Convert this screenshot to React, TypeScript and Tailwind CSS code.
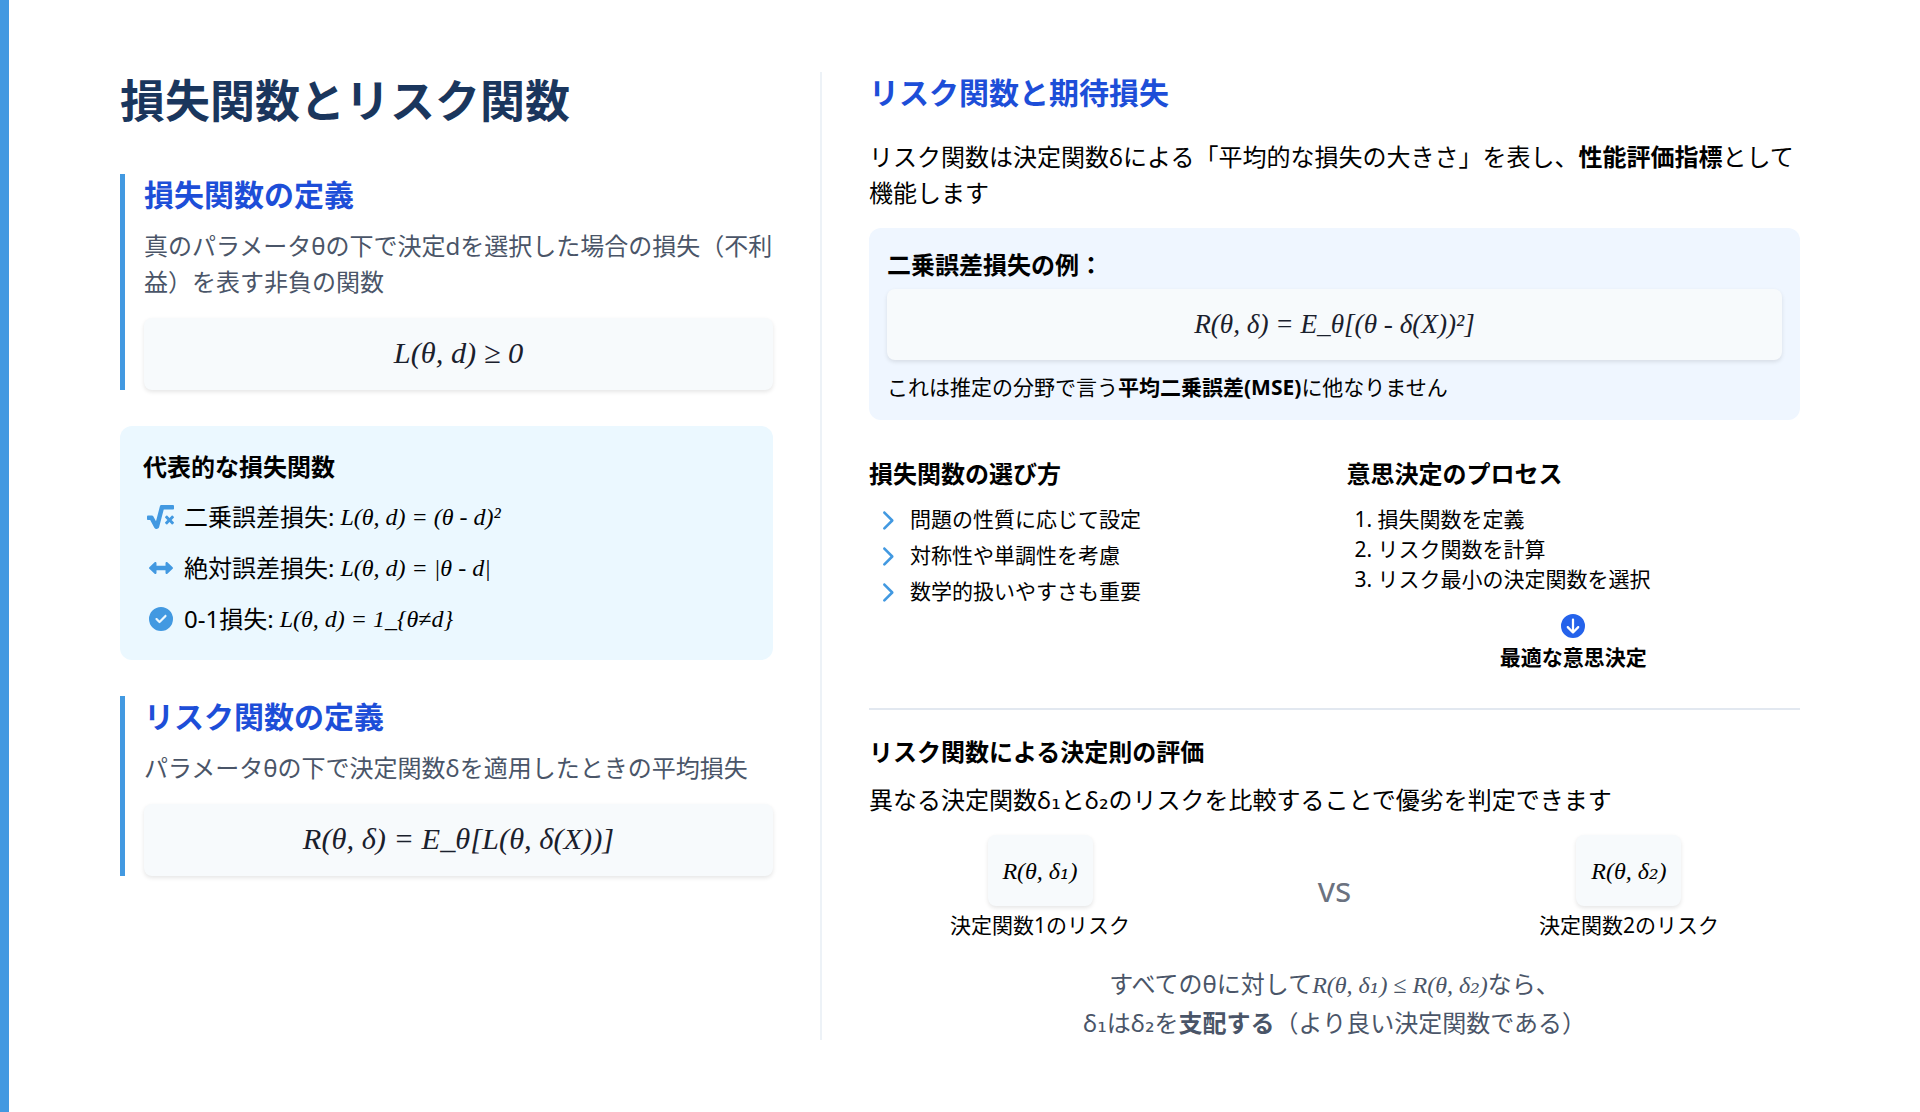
import { FaLeftRight, FaCircleCheck, FaChevronRight, FaCircleArrowDown } from 'react-icons/fa6';
import { FaSquareRootAlt } from 'react-icons/fa';

const jp = { fontFamily: '"Noto Sans", "Noto Sans CJK JP", sans-serif' };

function Math({ children, className = '' }: { children: React.ReactNode; className?: string }) {
  return <span className={`font-['Liberation_Serif',serif] italic ${className}`}>{children}</span>;
}

// the subscripts in the formulas and the body text come from DejaVu
function MathSub({ children }: { children: React.ReactNode }) {
  return <span className="font-['DejaVu_Serif',serif]">{children}</span>;
}

function Sub({ children }: { children: React.ReactNode }) {
  return <span className="font-['DejaVu_Sans',sans-serif]">{children}</span>;
}

function FormulaBox({ children }: { children: React.ReactNode }) {
  return (
    <div className="h-[72px] flex items-center justify-center rounded-lg bg-[#f7fafc] shadow-[0_2px_4px_rgba(0,0,0,0.1)] text-[30.4px] text-[#1a202c]">
      <Math>{children}</Math>
    </div>
  );
}

function Definition({ title, text, formula }: { title: string; text: string; formula: string }) {
  return (
    <section className="border-l-[5px] border-[#4299e1] pl-[19px]">
      <h2 className="text-[30px] leading-[42px] font-bold text-[#1d4ed8] mb-[12px]">{title}</h2>
      <p className="text-[24px] leading-[36px] text-[#4a5568] mb-[18px]">{text}</p>
      <FormulaBox>{formula}</FormulaBox>
    </section>
  );
}

export default function App() {
  const losses = [
    { icon: <FaSquareRootAlt className="h-[24px] w-[27px] -ml-[2px]" />, label: '二乗誤差損失:', formula: 'L(θ, d) = (θ - d)²' },
    { icon: <FaLeftRight className="h-[24px] w-[24px]" />, label: '絶対誤差損失:', formula: 'L(θ, d) = |θ - d|' },
    { icon: <FaCircleCheck className="h-[24px] w-[24px]" />, label: '0-1損失:', formula: 'L(θ, d) = 1_{θ≠d}' },
  ];

  return (
    <div style={jp} className="w-[1920px] h-[1112px] bg-white border-l-[9px] border-[#4299e1] flex pl-[111px] pr-[120px] pt-[72px] text-black overflow-hidden">
      <div className="w-[702px] h-[968px] border-r-2 border-[#edf2f7] pr-[47px] shrink-0">
        <h1 className="text-[45px] leading-[58px] font-bold text-[#1a365d] mb-[44px]">損失関数とリスク関数</h1>
        <Definition
          title="損失関数の定義"
          text="真のパラメータθの下で決定dを選択した場合の損失（不利益）を表す非負の関数"
          formula="L(θ, d) ≥ 0"
        />
        <div className="mt-[36px] mb-[36px] h-[234px] rounded-xl bg-[#ebf8ff] px-[23px] pt-[23px]">
          <h3 className="text-[24px] leading-[36px] font-bold mb-[6px]">代表的な損失関数</h3>
          <ul>
            {losses.map(l => (
              <li key={l.label} className="flex items-center h-[51px] text-[24px]">
                <span className="text-[#4299e1] w-[36px] mr-[5px] flex justify-center">{l.icon}</span>
                <span>{l.label}</span>
                <Math className="ml-[6px] text-[24px]">{l.formula}</Math>
              </li>
            ))}
          </ul>
        </div>
        <Definition
          title="リスク関数の定義"
          text="パラメータθの下で決定関数δを適用したときの平均損失"
          formula="R(θ, δ) = E_θ[L(θ, δ(X))]"
        />
      </div>

      <div className="flex-1 pl-[47px]">
        <h2 className="text-[30px] leading-[42px] font-bold text-[#1d4ed8] mb-[25px]">リスク関数と期待損失</h2>
        <p className="text-[24px] leading-[36px] mb-[17px]">
          リスク関数は決定関数δによる「平均的な損失の大きさ」を表し、<strong>性能評価指標</strong>として機能します
        </p>
        <div className="rounded-xl bg-[#eff6ff] px-[18px] pt-[19px] h-[192px]">
          <h3 className="text-[24px] leading-[36px] font-bold mb-[6px]">二乗誤差損失の例：</h3>
          <div className="h-[71px] flex items-center justify-center rounded-lg bg-[#f7fafc] shadow-[0_2px_4px_rgba(0,0,0,0.1)] text-[27.2px] text-[#1a202c]">
            <Math>R(θ, δ) = E_θ[(θ - δ(X))²]</Math>
          </div>
          <p className="text-[21px] leading-[32px] mt-[11px]">
            これは推定の分野で言う<strong>平均二乗誤差(MSE)</strong>に他なりません
          </p>
        </div>

        <div className="grid grid-cols-2 gap-[24px] mt-[36px]">
          <div>
            <h3 className="text-[24px] leading-[36px] font-bold mb-[10px]">損失関数の選び方</h3>
            <ul className="text-[21px]">
              {['問題の性質に応じて設定', '対称性や単調性を考慮', '数学的扱いやすさも重要'].map(t => (
                <li key={t} className="flex items-center h-[36px]">
                  <FaChevronRight className="w-[14px] h-[21px] text-[#4299e1] ml-[11px] mr-[16px]" />
                  {t}
                </li>
              ))}
            </ul>
          </div>
          <div>
            <h3 className="text-[24px] leading-[36px] font-bold mb-[12px]">意思決定のプロセス</h3>
            <ol className="text-[21px] leading-[30px] pl-[8px]">
              <li>1. 損失関数を定義</li>
              <li>2. リスク関数を計算</li>
              <li>3. リスク最小の決定関数を選択</li>
            </ol>
            <div className="flex flex-col items-center mt-[20px]">
              <FaCircleArrowDown className="w-[24px] h-[24px] text-[#2563eb]" />
              <span className="text-[21px] leading-[32px] font-bold mt-[3px]">最適な意思決定</span>
            </div>
          </div>
        </div>

        <div className="border-t-2 border-[#e2e8f0] mt-[35px] pt-[24px]">
          <h3 className="text-[24px] leading-[36px] font-bold mb-[12px]">リスク関数による決定則の評価</h3>
          <p className="text-[24px] leading-[36px]">異なる決定関数δ<Sub>₁</Sub>とδ<Sub>₂</Sub>のリスクを比較することで優劣を判定できます</p>
          <div className="flex items-center justify-between px-[81px] mt-[16px]">
            <div className="flex flex-col items-center">
              <div className="w-[105px] h-[71px] flex items-center justify-center rounded-lg bg-[#f7fafc] shadow-[0_2px_4px_rgba(0,0,0,0.1)] text-[24px]">
                <Math>R(θ, δ<MathSub>₁</MathSub>)</Math>
              </div>
              <span className="text-[21px] leading-[32px] mt-[3px]">決定関数1のリスク</span>
            </div>
            <span className="text-[34px] text-[#6b7280] mt-[2px]">vs</span>
            <div className="flex flex-col items-center">
              <div className="w-[105px] h-[71px] flex items-center justify-center rounded-lg bg-[#f7fafc] shadow-[0_2px_4px_rgba(0,0,0,0.1)] text-[24px]">
                <Math>R(θ, δ<MathSub>₂</MathSub>)</Math>
              </div>
              <span className="text-[21px] leading-[32px] mt-[3px]">決定関数2のリスク</span>
            </div>
          </div>
          <p className="text-[24px] leading-[38px] text-center text-[#4a5568] mt-[24px]">
            すべてのθに対して<Math>R(θ, δ<MathSub>₁</MathSub>) ≤ R(θ, δ<MathSub>₂</MathSub>)</Math>なら、<br />
            δ<Sub>₁</Sub>はδ<Sub>₂</Sub>を<strong>支配する</strong>（より良い決定関数である）
          </p>
        </div>
      </div>
    </div>
  );
}
